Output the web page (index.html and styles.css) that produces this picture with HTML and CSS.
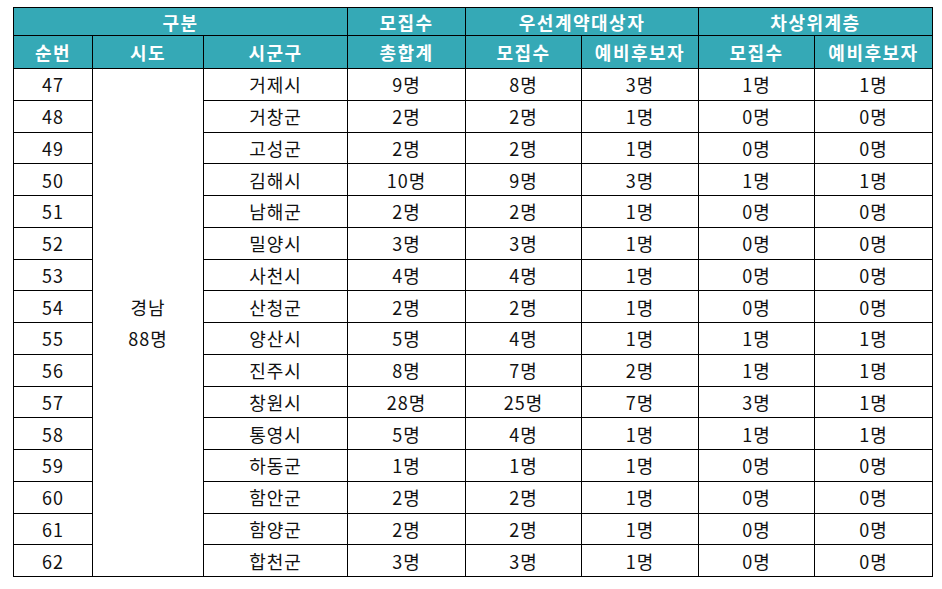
FILE: index.html
```html
<!DOCTYPE html>
<html lang="ko">
<head>
<meta charset="utf-8">
<title>모집 현황</title>
<link rel="stylesheet" href="styles.css">
</head>
<body>
<table class="grid">
  <colgroup>
    <col class="c-no"><col class="c-sido"><col class="c-sgg"><col class="c-total">
    <col class="c-a"><col class="c-b"><col class="c-c"><col class="c-d">
  </colgroup>
  <thead>
    <tr class="h1">
      <th colspan="3">구분</th>
      <th>모집수</th>
      <th colspan="2">우선계약대상자</th>
      <th colspan="2">차상위계층</th>
    </tr>
    <tr class="h2">
      <th>순번</th><th>시도</th><th>시군구</th><th>총합계</th>
      <th>모집수</th><th>예비후보자</th><th>모집수</th><th>예비후보자</th>
    </tr>
  </thead>
  <tbody>
    <tr><td>47</td><td rowspan="16" class="sido">경남<br>88명</td><td>거제시</td><td>9명</td><td>8명</td><td>3명</td><td>1명</td><td>1명</td></tr>
    <tr><td>48</td><td>거창군</td><td>2명</td><td>2명</td><td>1명</td><td>0명</td><td>0명</td></tr>
    <tr><td>49</td><td>고성군</td><td>2명</td><td>2명</td><td>1명</td><td>0명</td><td>0명</td></tr>
    <tr><td>50</td><td>김해시</td><td>10명</td><td>9명</td><td>3명</td><td>1명</td><td>1명</td></tr>
    <tr><td>51</td><td>남해군</td><td>2명</td><td>2명</td><td>1명</td><td>0명</td><td>0명</td></tr>
    <tr><td>52</td><td>밀양시</td><td>3명</td><td>3명</td><td>1명</td><td>0명</td><td>0명</td></tr>
    <tr><td>53</td><td>사천시</td><td>4명</td><td>4명</td><td>1명</td><td>0명</td><td>0명</td></tr>
    <tr><td>54</td><td>산청군</td><td>2명</td><td>2명</td><td>1명</td><td>0명</td><td>0명</td></tr>
    <tr><td>55</td><td>양산시</td><td>5명</td><td>4명</td><td>1명</td><td>1명</td><td>1명</td></tr>
    <tr><td>56</td><td>진주시</td><td>8명</td><td>7명</td><td>2명</td><td>1명</td><td>1명</td></tr>
    <tr><td>57</td><td>창원시</td><td>28명</td><td>25명</td><td>7명</td><td>3명</td><td>1명</td></tr>
    <tr><td>58</td><td>통영시</td><td>5명</td><td>4명</td><td>1명</td><td>1명</td><td>1명</td></tr>
    <tr><td>59</td><td>하동군</td><td>1명</td><td>1명</td><td>1명</td><td>0명</td><td>0명</td></tr>
    <tr><td>60</td><td>함안군</td><td>2명</td><td>2명</td><td>1명</td><td>0명</td><td>0명</td></tr>
    <tr><td>61</td><td>함양군</td><td>2명</td><td>2명</td><td>1명</td><td>0명</td><td>0명</td></tr>
    <tr><td>62</td><td>합천군</td><td>3명</td><td>3명</td><td>1명</td><td>0명</td><td>0명</td></tr>
  </tbody>
</table>
</body>
</html>
```
FILE: styles.css
```css
html, body {
  margin: 0;
  padding: 0;
  background: #ffffff;
}
body {
  padding: 7px 0 0 13px;
  font-family: "Noto Sans CJK KR", "Noto Sans", sans-serif;
}
.grid {
  border-collapse: collapse;
  table-layout: fixed;
  width: 919px;
  color: #111111;
  font-size: 18px;
}
.c-no { width: 79px; }
.c-sido { width: 111px; }
.c-sgg { width: 144px; }
.c-total { width: 118px; }
.c-a { width: 116px; }
.c-b { width: 117px; }
.c-c { width: 116px; }
.c-d { width: 118px; }
.grid th, .grid td {
  border: 1px solid #000;
  padding: 0;
  text-align: center;
  vertical-align: middle;
  line-height: 20px;
}
.grid td {
  letter-spacing: 1px;
}
.grid th {
  background: #35a9b6;
  color: #ffffff;
  font-weight: 700;
  font-size: 18px;
  letter-spacing: 1.5px;
}
.h1 { height: 28px; }
.h2 { height: 33px; }
.grid tbody tr { height: 31.75px; }
.grid td.sido {
  line-height: 31px;
}
```
